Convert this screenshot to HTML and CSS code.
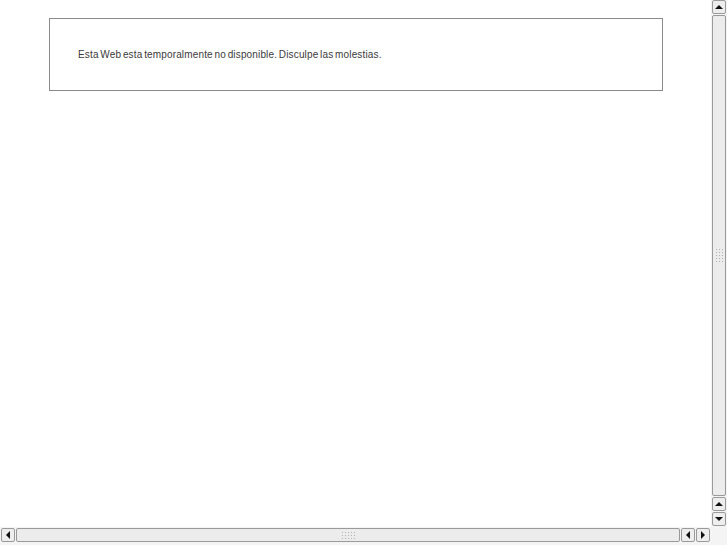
FILE: index.html
```html
<!DOCTYPE html>
<html lang="es">
<head>
    <meta charset="UTF-8">
    <title>Web no disponible</title>
    <link rel="stylesheet" href="styles.css">
</head>
<body>
<div class="frame">
    <div class="view">
        <div class="page">
            <div class="notice">
                <p>Esta Web esta temporalmente no disponible. Disculpe las molestias.</p>
            </div>
        </div>
        <div class="vbar">
            <div class="btn"><span class="arr up"></span></div>
            <div class="thumb v"><span class="grip"></span></div>
            <div class="btn"><span class="arr up"></span></div>
            <div class="btn"><span class="arr down"></span></div>
        </div>
    </div>
    <div class="hbar">
        <div class="btn"><span class="arr left"></span></div>
        <div class="thumb h"><span class="grip"></span></div>
        <div class="btn"><span class="arr left"></span></div>
        <div class="btn"><span class="arr right"></span></div>
        <div class="corner"></div>
    </div>
</div>
</body>
</html>
```

FILE: styles.css
```css
*{
    margin: 0;
    padding: 0;
    box-sizing: border-box;
}
body{
    width: 727px;
    height: 545px;
    overflow: hidden;
    background-color: #fff;
    font-family: "Liberation Sans", Arial, sans-serif;
}
.frame{
    width: 727px;
    height: 545px;
    display: flex;
    flex-direction: column;
}
.view{
    display: flex;
    height: 527px;
}
.page{
    flex: 1;
    padding: 18px 0 0 49px;
}
.notice{
    width: 614px;
    height: 73px;
    border: 1px solid #8a8a8a;
    display: flex;
    align-items: center;
    padding-left: 28px;
}
.notice p{
    font-size: 10px;
    letter-spacing: 0.15px;
    word-spacing: -1.2px;
    color: #3a3a3a;
    margin-top: -1px;
}
.vbar{
    width: 16px;
    display: flex;
    flex-direction: column;
    padding: 0 1px 1px 1px;
    gap: 1px;
    background-color: #f4f4f4;
}
.hbar{
    height: 18px;
    display: flex;
    padding: 1px 0 3px 1px;
    gap: 1px;
    background-color: #f4f4f4;
}
.btn{
    width: 14px;
    height: 14px;
    flex: none;
    border: 1px solid #9a9a9a;
    border-radius: 2px;
    background-color: #eeeeee;
    display: flex;
    justify-content: center;
    align-items: center;
}
.thumb{
    border: 1px solid #9a9a9a;
    border-radius: 2px;
    background-color: #ececec;
    display: flex;
    justify-content: center;
    align-items: center;
}
.thumb.v{
    flex: 1;
    width: 14px;
}
.thumb.h{
    flex: 1;
    height: 14px;
}
.grip{
    display: block;
    background-image: radial-gradient(circle, #b0b0b0 0.7px, transparent 0.8px);
    background-size: 3px 3px;
}
.thumb.v .grip{
    width: 9px;
    height: 15px;
}
.thumb.h .grip{
    width: 15px;
    height: 9px;
}
.corner{
    width: 16px;
    flex: none;
}
.arr{
    width: 0;
    height: 0;
    border: 4px solid transparent;
}
.arr.up{
    border-top: none;
    border-bottom: 4px solid #111;
}
.arr.down{
    border-bottom: none;
    border-top: 4px solid #111;
}
.arr.left{
    border-left: none;
    border-right: 4px solid #111;
}
.arr.right{
    border-right: none;
    border-left: 4px solid #111;
}
```
